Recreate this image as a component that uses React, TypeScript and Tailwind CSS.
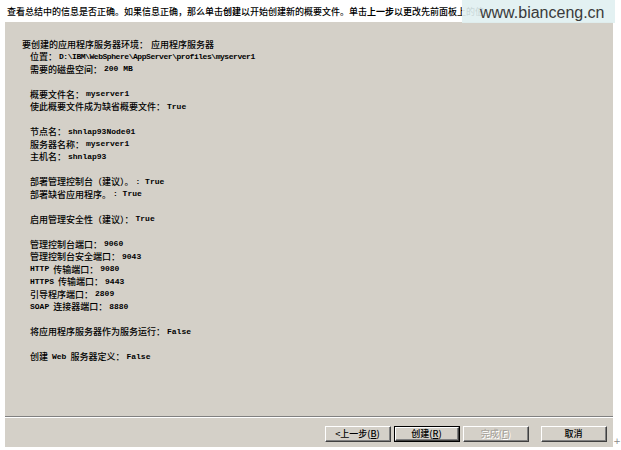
const cjk = "font-['Noto_Sans_CJK_SC',sans-serif] font-medium";
const mono = "font-['Liberation_Mono','Noto_Sans_CJK_SC',monospace] text-[8px] font-bold";

type Line = { label?: string; value?: string; indent?: boolean; mono?: string } | null;

const lines: Line[] = [
  { label: "要创建的应用程序服务器环境：", value: "应用程序服务器", indent: false },
  { label: "位置：", value: "D:\\IBM\\WebSphere\\AppServer\\profiles\\myserver1" },
  { label: "需要的磁盘空间：", value: "200 MB" },
  null,
  { label: "概要文件名：", value: "myserver1" },
  { label: "使此概要文件成为缺省概要文件：", value: "True" },
  null,
  { label: "节点名：", value: "shnlap93Node01" },
  { label: "服务器名称：", value: "myserver1" },
  { label: "主机名：", value: "shnlap93" },
  null,
  { label: "部署管理控制台（建议）。", value: ": True" },
  { label: "部署缺省应用程序。", value: ": True" },
  null,
  { label: "启用管理安全性（建议）：", value: "True" },
  null,
  { label: "管理控制台端口：", value: "9060" },
  { label: "管理控制台安全端口：", value: "9043" },
  { mono: "HTTP", label: "传输端口：", value: "9080" },
  { mono: "HTTPS", label: "传输端口：", value: "9443" },
  { label: "引导程序端口：", value: "2809" },
  { mono: "SOAP", label: "连接器端口：", value: "8880" },
  null,
  { label: "将应用程序服务器作为服务运行：", value: "False" },
  null,
  { label: "创建", mono: "Web", value: "False" },
];

const Button = ({
  children,
  isDefault,
  disabled,
}: {
  children: React.ReactNode;
  isDefault?: boolean;
  disabled?: boolean;
}) => (
  <div className={isDefault ? "border border-black" : ""}>
    <div
      className={`${isDefault ? "w-[64px] h-[14px]" : "w-[66px] h-[16px]"} border border-t-white border-l-white border-r-[#404040] border-b-[#404040] bg-[#d4d0c8]`}
    >
      <div
        className={`h-full border-r border-b border-[#808080] flex items-center justify-center text-[9px] leading-none ${cjk} ${
          disabled ? "text-[#a8a49c] [text-shadow:1px_1px_0_#fff]" : "text-black"
        }`}
      >
        {children}
      </div>
    </div>
  </div>
);

export default function App() {
  return (
    <div className="w-[621px] h-[450px] bg-white overflow-hidden flex flex-col text-black">
      {/* top instruction, partly hidden under the site stamp */}
      <div className="h-[22px] relative flex items-center pl-[7px]">
        <p className={`${cjk} text-[9px] leading-none whitespace-nowrap`}>
          查看总结中的信息是否正确。如果信息正确，那么单击<b>创建</b>以开始创建新的概要文件。单击<b>上一步</b>以更改先前面板上的值。
        </p>
        <div className="absolute left-[462px] top-0 w-[153px] h-[23px] bg-[#e0eff1]/90 flex items-center pl-[18px]">
          <span className="font-['Liberation_Sans',sans-serif] text-[16px] leading-none text-[#3a3a3a] mt-[3px]">
            www.bianceng.cn
          </span>
        </div>
      </div>

      <div className="flex">
        <div className="w-[5px]" />
        <div className="w-[608px] h-[425px] bg-[#d4d0c8] flex flex-col">
          <div className="flex-1 pt-[16px] pl-[17px]">
            {lines.map((l, i) =>
              l === null ? (
                <div key={i} className="h-[12.5px]" />
              ) : (
                <div
                  key={i}
                  className={`h-[12.5px] flex items-center whitespace-nowrap ${l.indent === false ? "" : "pl-[8px]"}`}
                >
                  {l.mono && l.label !== "创建" && <span className={`${mono} mr-[4px]`}>{l.mono}</span>}
                  <span className={`${cjk} text-[9px] leading-none`}>{l.label}</span>
                  {l.label === "创建" && <span className={`${mono} ml-[4px] mr-[4px]`}>{l.mono}</span>}
                  {l.label === "创建" && <span className={`${cjk} text-[9px] leading-none`}>服务器定义：</span>}
                  {l.indent === false ? (
                    <span className={`${cjk} text-[9px] leading-none ml-[3px]`}>{l.value}</span>
                  ) : (
                    <span className={`${mono} ml-[2px] ${l.value?.startsWith("D:") ? "tracking-[-0.45px]" : ""}`}>
                      {l.value}
                    </span>
                  )}
                </div>
              )
            )}
          </div>
          <div className="h-px bg-[#808080]" />
          <div className="h-px bg-white" />
          <div className="flex justify-end items-center pt-[8px] pb-[5px] pr-[6px]">
            <div className="flex gap-[3px]">
              <Button>
                &lt;上一步(<span className="underline">B</span>)
              </Button>
              <Button isDefault>
                创建(<span className="underline">R</span>)
              </Button>
              <Button disabled>
                完成(<span className="underline">F</span>)
              </Button>
            </div>
            <div className="ml-[12px]">
              <Button>取消</Button>
            </div>
          </div>
        </div>
        <div className="flex-1 flex items-end justify-center pb-[1px]">
          <span className="text-[9px] leading-none text-[#888] font-['DejaVu_Sans',sans-serif]">+</span>
        </div>
      </div>
    </div>
  );
}
